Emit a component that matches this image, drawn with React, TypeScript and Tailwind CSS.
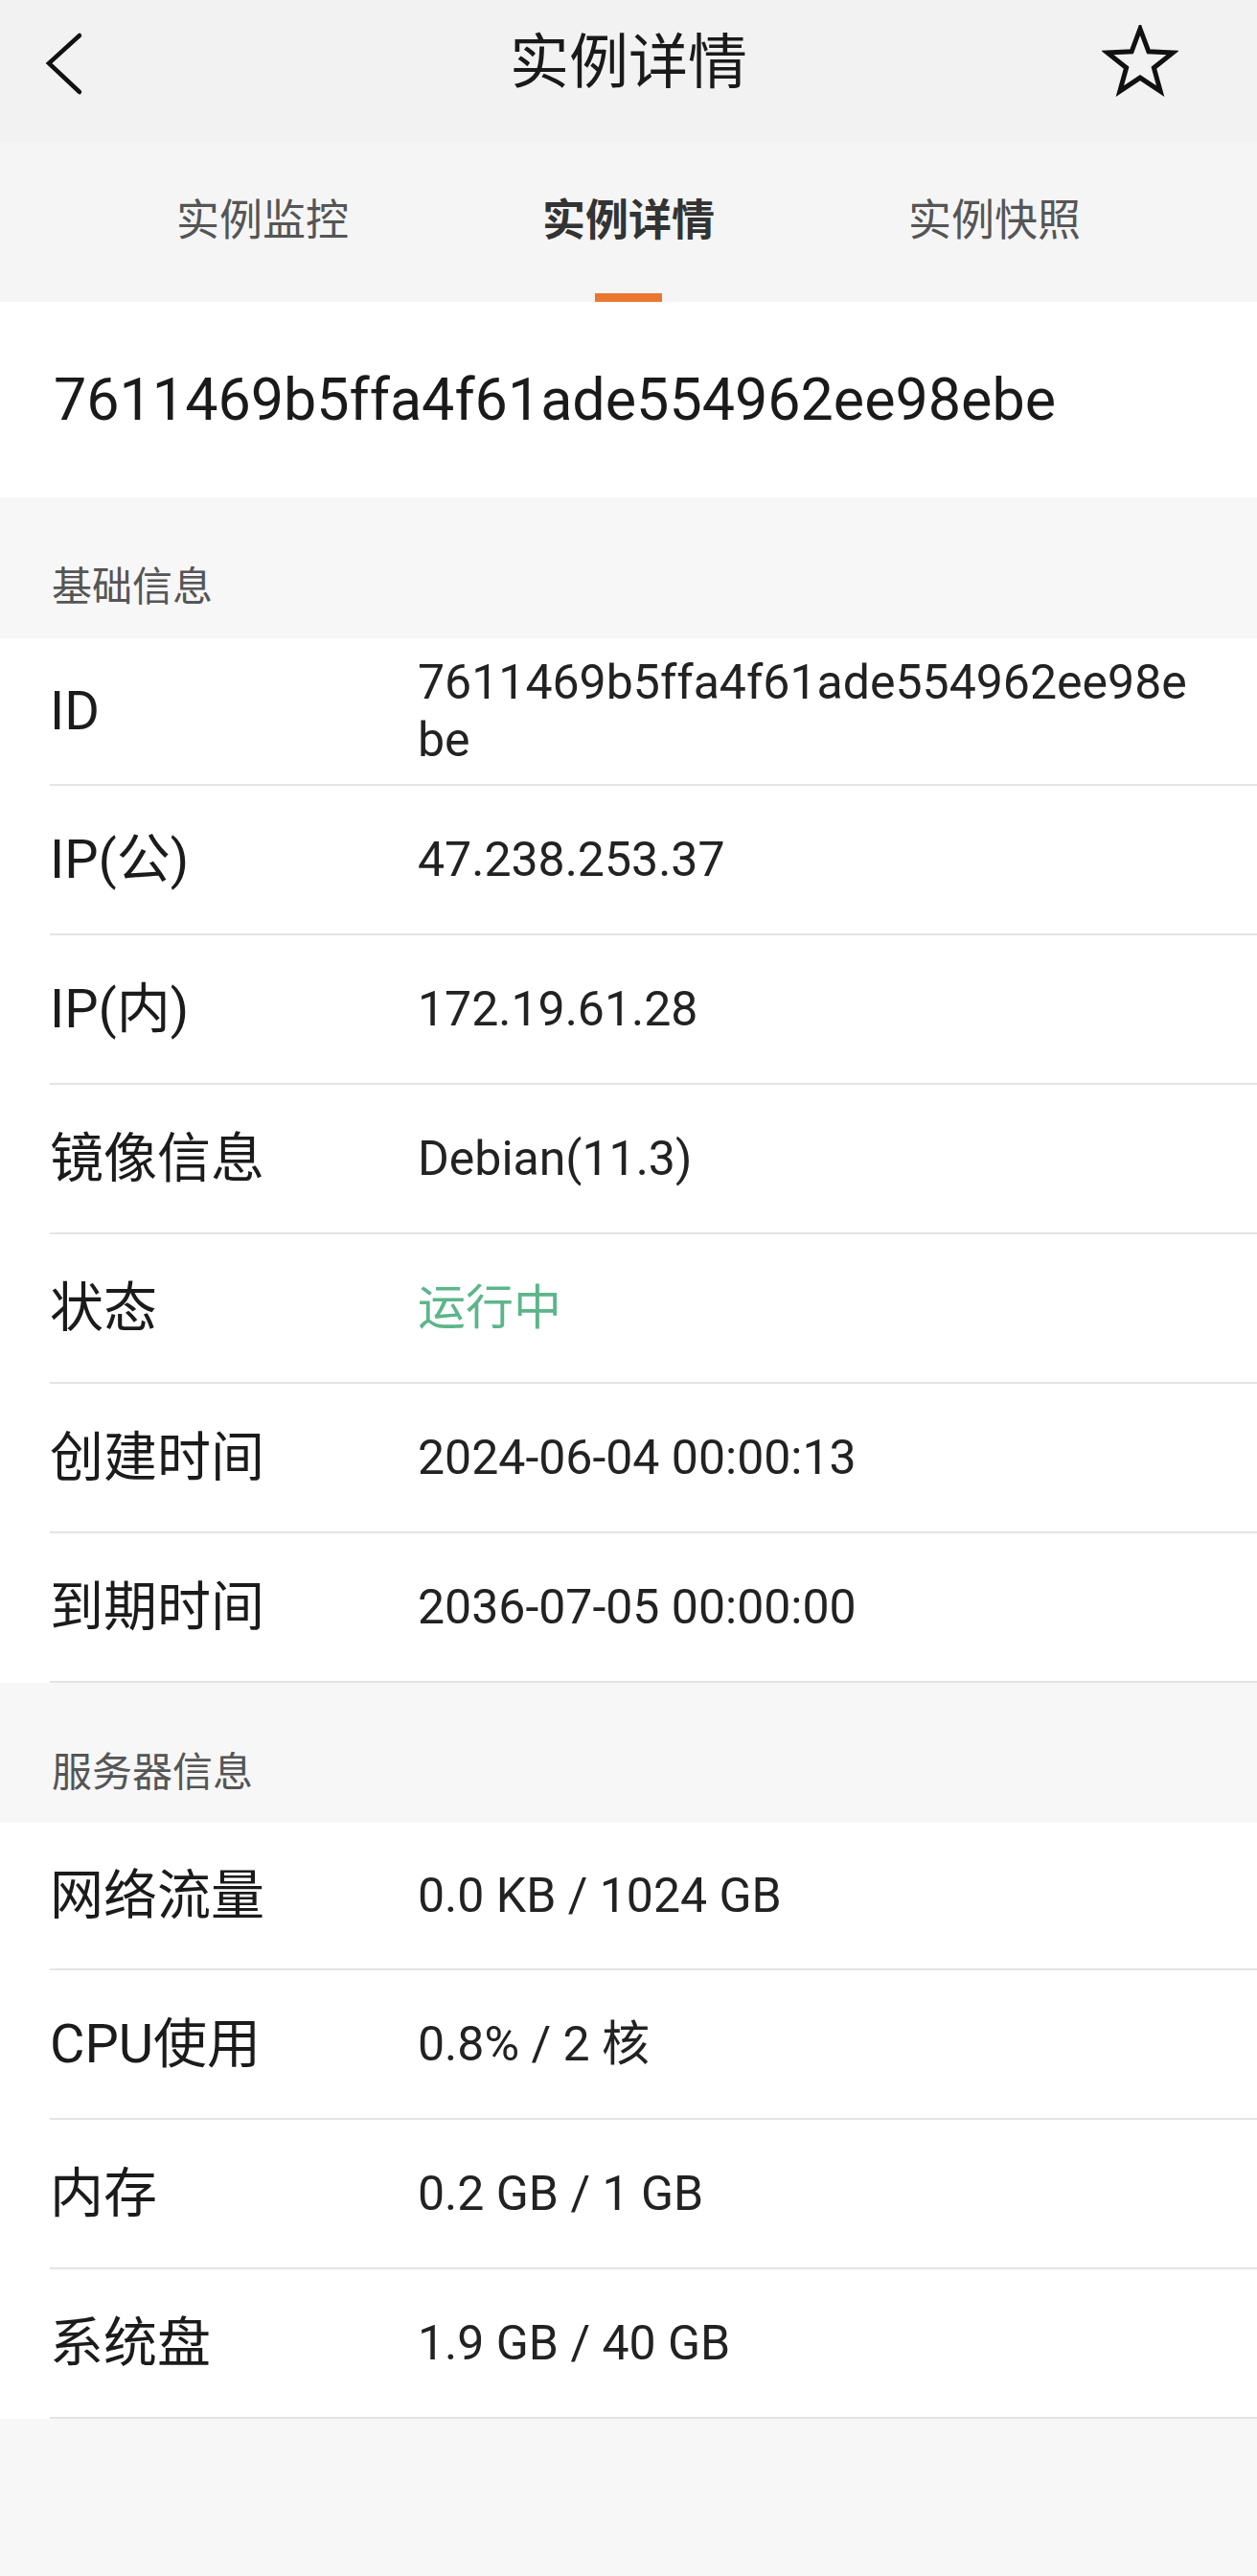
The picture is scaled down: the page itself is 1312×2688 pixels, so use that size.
import React from "react";

const basic: { label: string; value: string; green?: boolean }[] = [
  { label: "ID", value: "7611469b5ffa4f61ade554962ee98ebe" },
  { label: "IP(公)", value: "47.238.253.37" },
  { label: "IP(内)", value: "172.19.61.28" },
  { label: "镜像信息", value: "Debian(11.3)" },
  { label: "状态", value: "运行中", green: true },
  { label: "创建时间", value: "2024-06-04 00:00:13" },
  { label: "到期时间", value: "2036-07-05 00:00:00" },
];

const server: { label: string; value: string; green?: boolean }[] = [
  { label: "网络流量", value: "0.0 KB / 1024 GB" },
  { label: "CPU使用", value: "0.8% / 2 核" },
  { label: "内存", value: "0.2 GB / 1 GB" },
  { label: "系统盘", value: "1.9 GB / 40 GB" },
];

function Row({
  label,
  value,
  green,
  first,
}: {
  label: string;
  value: string;
  green?: boolean;
  first?: boolean;
}) {
  return (
    <div className="bg-white pl-[52px]">
      <div
        className={`flex items-center border-b-2 border-[#e4e4e4] ${
          first ? "h-[154px]" : "h-[156px]"
        }`}
      >
        <div className="w-[384px] shrink-0 text-[56px] leading-[64px] text-[#1b1b1b]">{label}</div>
        <div
          className={`min-w-0 flex-1 break-all pr-[61px] text-[50px] leading-[60px] ${
            green ? "text-[#5db58b]" : "text-[#222222]"
          }`}
        >
          {value}
        </div>
      </div>
    </div>
  );
}

function SectionHeader({ title }: { title: string }) {
  return (
    <div className="h-[146px] bg-[#f7f7f7] pl-[54px] pt-[73px] text-[42px] leading-[42px] text-[#555555]">
      {title}
    </div>
  );
}

export default function App() {
  return (
    <div className="min-h-[2688px] w-[1312px] bg-[#f7f7f7] font-['Roboto','Noto_Sans_CJK_SC',sans-serif]">
      {/* top bar */}
      <div className="grid h-[149px] grid-cols-3 items-center bg-[#f2f2f2] pb-[17px]">
        <div className="pl-[44px]">
          <svg width="48" height="80" viewBox="0 0 48 80" fill="none">
            <polyline
              points="39,11 7,40 39,70"
              stroke="#111111"
              strokeWidth="4.5"
              strokeLinecap="round"
              strokeLinejoin="miter"
            />
          </svg>
        </div>
        <div className="text-center text-[62px] leading-[70px] text-[#1a1a1a]">实例详情</div>
        <div className="flex justify-end pr-[82px]">
          <svg width="80" height="80" viewBox="0 0 80 80" fill="none">
            <polygon
              points="40,4 48.88,27.78 74.24,28.88 54.36,44.67 61.16,69.12 40,55.1 18.84,69.12 25.64,44.67 5.76,28.88 31.12,27.78"
              stroke="#111111"
              strokeWidth="5"
              strokeLinejoin="miter"
            />
          </svg>
        </div>
      </div>

      {/* tabs */}
      <div className="flex h-[166px] justify-center bg-[#f5f5f5]">
        {[
          { t: "实例监控", active: false },
          { t: "实例详情", active: true },
          { t: "实例快照", active: false },
        ].map((tab) => (
          <div key={tab.t} className="flex w-[382px] flex-col items-center pt-[52px]">
            <div
              className={`text-[45px] leading-[60px] ${
                tab.active ? "font-bold text-[#333333]" : "text-[#555555]"
              }`}
            >
              {tab.t}
            </div>
            {tab.active && <div className="mt-auto h-[9px] w-[70px] bg-[#ea772f]" />}
          </div>
        ))}
      </div>

      {/* instance id */}
      <div className="flex h-[204px] items-center bg-white pl-[56px] text-[61px] leading-[70px] text-[#1a1a1a]">
        7611469b5ffa4f61ade554962ee98ebe
      </div>

      <div className="h-[147px] bg-[#f7f7f7] pl-[54px] pt-[73px] text-[42px] leading-[42px] text-[#555555]">
        基础信息
      </div>
      {basic.map((r, i) => (
        <Row key={r.label} {...r} first={i === 0} />
      ))}

      <SectionHeader title="服务器信息" />
      {server.map((r, i) => (
        <Row key={r.label} {...r} first={i === 0} />
      ))}
    </div>
  );
}
